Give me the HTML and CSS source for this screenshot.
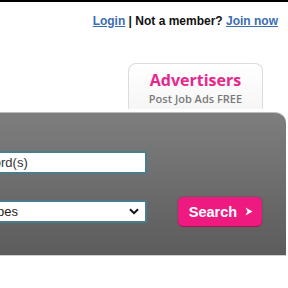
FILE: index.html
```html
<!DOCTYPE html>
<html>
<head>
<meta charset="utf-8">
<link rel="stylesheet" href="styles.css">
</head>
<body>
<div class="topbar"></div>
<div class="header">
  <a href="#" class="link">Login</a><span class="sep"> | Not a member? </span><a href="#" class="link">Join now</a>
</div>
<div class="adv-row">
  <div class="adv">
    <div class="adv-title">Advertisers</div>
    <div class="adv-sub">Post Job Ads FREE</div>
  </div>
</div>
<div class="panel">
  <div class="row row1">
    <input class="kw" type="text" value="Keyword(s)">
  </div>
  <div class="row row2">
    <div class="sel">
      <span class="sel-text">All Job Types</span>
      <svg class="chev" width="10" height="7" viewBox="0 0 10 7"><path d="M1 1.2 L5 5.2 L9 1.2" fill="none" stroke="#111" stroke-width="2"/></svg>
    </div>
    <button class="btn">Search <svg class="arr" width="8" height="9" viewBox="0 0 8 9"><path d="M0.5 0.5 L7.5 4.5 L0.5 8.5 L2.5 4.5 Z" fill="#fff"/></svg></button>
  </div>
</div>
</body>
</html>
```
FILE: styles.css
```css
html, body {
  margin: 0;
  padding: 0;
  background: #fff;
  width: 288px;
  height: 288px;
  overflow: hidden;
  font-family: "Liberation Sans", Arial, sans-serif;
}
.topbar {
  height: 2px;
  background: #000;
}
.header {
  display: flex;
  justify-content: flex-end;
  align-items: baseline;
  padding: 12px 10px 0 0;
  height: 22px;
  white-space: nowrap;
}
.link {
  color: #3b6db3;
  font-size: 12px;
  font-weight: bold;
  text-decoration: underline;
}
.sep {
  color: #111;
  font-size: 12px;
  font-weight: bold;
  white-space: pre;
}
.adv-row {
  display: flex;
  padding: 27px 0 0 128px;
}
.adv {
  width: 133px;
  height: 45px;
  border: 1px solid #dcdcdc;
  border-bottom: none;
  border-radius: 8px 8px 0 0;
  background: linear-gradient(#ffffff, #f6f6f6);
  display: flex;
  flex-direction: column;
  align-items: center;
  font-family: "Open Sans", sans-serif;
}
.adv-title {
  color: #e5288e;
  font-size: 16px;
  font-weight: bold;
  line-height: 20px;
  margin-top: 6px;
}
.adv-sub {
  color: #7a7a7a;
  font-size: 11px;
  font-weight: 600;
  line-height: 14px;
  margin-top: 2px;
}
.panel {
  margin-top: 3px;
  width: 286px;
  height: 144px;
  border-top: 1px solid #bdbdbd;
  border-bottom: 1px solid #d0d0d0;
  border-radius: 0 11px 0 0;
  background: linear-gradient(#7e7e7e, #5c5c5c);
  box-sizing: border-box;
  display: flex;
  flex-direction: column;
}
.row {
  display: flex;
  align-items: center;
}
.row1 {
  margin-top: 38px;
}
.kw {
  margin: 0 0 0 -44px;
  width: 191px;
  height: 23px;
  box-sizing: border-box;
  border: 2px solid #4b7c8c;
  padding: 0 0 0 4px;
  font-family: "Liberation Sans", Arial, sans-serif;
  font-size: 13px;
  color: #333;
  background: #fff;
  outline: none;
}
.row2 {
  margin-top: 23px;
}
.sel {
  margin-left: -65px;
  width: 212px;
  height: 23px;
  box-sizing: border-box;
  border: 2px solid #4b7c8c;
  background: #fff;
  display: flex;
  align-items: center;
  justify-content: space-between;
  padding: 0 6px 0 4px;
  font-size: 13px;
  color: #222;
}
.chev {
  display: block;
}
.btn {
  margin-left: 31px;
  width: 84px;
  height: 29px;
  border: none;
  border-radius: 5px;
  background: #ef1a80;
  box-shadow: 0 1px 0 #b0105a, 0 0 2px rgba(0,0,0,0.3);
  color: #fff;
  font-family: "Liberation Sans", Arial, sans-serif;
  font-size: 14.5px;
  font-weight: bold;
  display: flex;
  align-items: center;
  justify-content: center;
  gap: 8px;
  padding: 0 0 0 2px;
}
.arr {
  display: block;
}
```
